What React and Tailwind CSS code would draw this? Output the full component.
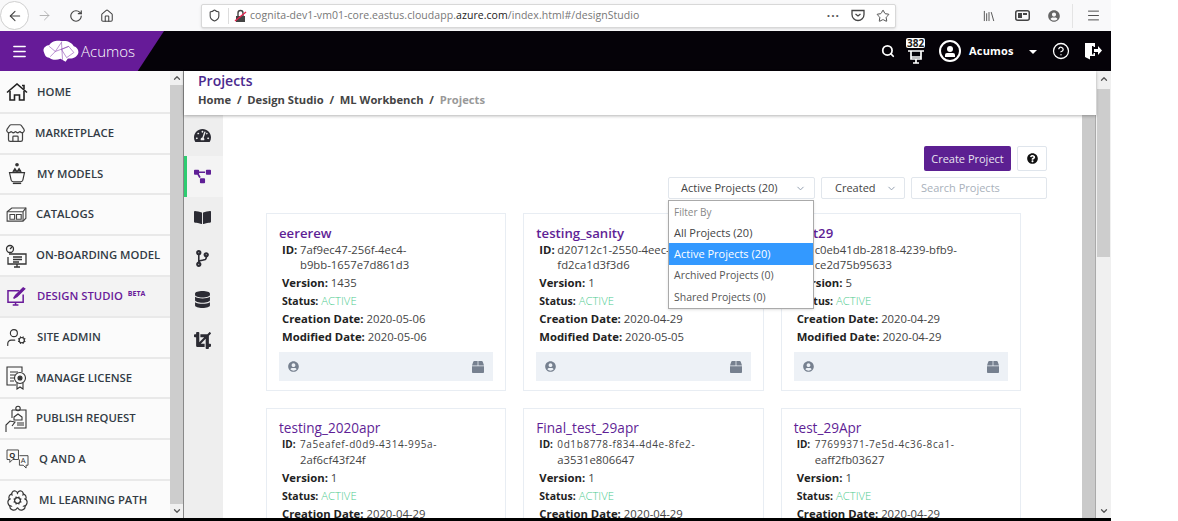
import { ArrowLeft, ArrowRight, RotateCw, House, Shield, Star, Menu, ChevronDown, ChevronUp, Store, UserCog, BrainCog, Search, CircleHelp, Library } from "lucide-react";
import { FaTachometerAlt, FaProjectDiagram, FaBookOpen, FaCodeBranch, FaDatabase, FaCrop, FaUserCircle, FaBox, FaQuestionCircle } from "react-icons/fa";

function HomeIcon() {
  return (
    <svg width="22" height="18" viewBox="0 0 22 18" fill="none" stroke="#222" strokeWidth="1.6">
      <path d="M1 9.500L11 1l10 8.500" />
      <path d="M4 8v9h4.500v-5h5v5H18V8" />
      <path d="M16 2.500h2v3.500" />
    </svg>
  );
}

function ModelsIcon() {
  return (
    <svg width="20" height="25" viewBox="0 0 24 28" fill="none" stroke="#333" strokeWidth="1.4">
      <circle cx="12" cy="3.5" r="2.2" fill="#333" stroke="none" />
      <path d="M7 12l2.5-4 2.5 4M12 12l2.5-4 2.5 4" fill="#333" />
      <path d="M3 13h18l-2 9a3 3 0 0 1-3 2H8a3 3 0 0 1-3-2z" />
      <path d="M7 26h10" />
    </svg>
  );
}

function CatalogIcon() {
  return (
    <svg width="21" height="15" viewBox="0 0 22 16" fill="none" stroke="#444" strokeWidth="1.2">
      <path d="M1 5l5-4h15v11l-3 3H1z" />
      <path d="M1 5h17v10M18 5l3-4" />
      <path d="M4 8h5v5H4zM11 8h5v5h-5z" />
    </svg>
  );
}

function BoardingIcon() {
  return (
    <svg width="22" height="24" viewBox="0 0 22 24" fill="none" stroke="#333" strokeWidth="1.3">
      <circle cx="5" cy="5" r="3.500" />
      <path d="M5 5l2-2" />
      <path d="M4 10h17v10H3v-7" />
      <path d="M8 13h9M8 15.500h9M8 18h6M9 23h6M12 20v3" />
    </svg>
  );
}

function DesignIcon() {
  return (
    <svg width="20" height="19" viewBox="0 0 21 20" fill="none" stroke="#6a1b9a" strokeWidth="1.6">
      <path d="M13 4H1v12h16V8" />
      <path d="M6 19h6M9 16v3" />
      <path d="M7 12l2-3 8-8 1.500 1-8 8z" fill="#6a1b9a" />
    </svg>
  );
}

function LicenseIcon() {
  return (
    <svg width="21" height="24" viewBox="0 0 21 24" fill="none" stroke="#333" strokeWidth="1.1">
      <path d="M10 19H1V1h15v5" />
      <path d="M4 6h8M4 9h5M4 12h4M4 15h4" />
      <circle cx="14" cy="12" r="5.500" />
      <circle cx="14" cy="12" r="2" fill="#333" />
      <path d="M11 17v6l3-2 3 2v-6" />
    </svg>
  );
}

function PublishIcon() {
  return (
    <svg width="22" height="28" viewBox="0 0 22 28" fill="none" stroke="#333" strokeWidth="1.1">
      <path d="M7 5h14v18H9" />
      <circle cx="13" cy="3.500" r="2.200" />
      <path d="M9 12l4-3 4 3v3H9zM12 18h7M12 20h7" />
      <path d="M7 5v8M1 27v-7l4-4 5 1-3 4" />
    </svg>
  );
}

function QaIcon() {
  return (
    <svg width="23" height="21" viewBox="0 0 24 22" fill="none" stroke="#444" strokeWidth="1">
      <path d="M1 1h12v10H7l-3 3v-3H1z" />
      <path d="M14 7h9v10h-2v3l-3-3h-4v-6" />
      <text x="3.500" y="9" fontSize="8" fontWeight="700" fill="#333" stroke="none" fontFamily="Open Sans">Q</text>
      <text x="15.500" y="15" fontSize="8" fill="#333" stroke="none" fontFamily="Open Sans">A</text>
    </svg>
  );
}

function BrainLogo() {
  return (
    <svg width="37" height="23" viewBox="0 0 36 22">
      <path d="M1 12c-2-4 2-7 5-7 2-4 8-5 12-4 5-1 10 1 12 5 4 1 6 6 3 9-2 3-6 3-9 3l-2 3-5-3c-4 2-9 1-11-1-3 0-4-2-5-5z" fill="#fff" />
      <path d="M6 6l6 5 6-9 1 17M12 11l-5 5M18 9l7-3 5 6-7 5-5-8M25 6l-13 5" fill="none" stroke="#7b2ca6" strokeWidth=".5" />
    </svg>
  );
}

function PocketIcon() {
  return (
    <svg width="14" height="13" viewBox="0 0 14 13" fill="none" stroke="#444" strokeWidth="1.3">
      <path d="M1 1.500h12v4a6 6 0 0 1-12 0z" />
      <path d="M4.500 5L7 7l2.500-2" />
    </svg>
  );
}

function LockIcon() {
  return (
    <svg width="14" height="14" viewBox="0 0 14 14">
      <path d="M2 7h9v6H2z" fill="#444" />
      <path d="M4 7V4a2.500 2.500 0 0 1 5 0v3" fill="none" stroke="#444" strokeWidth="1.400" />
      <path d="M1 12L12 3" stroke="#e22850" strokeWidth="1.500" />
    </svg>
  );
}

function SidebarIcon() {
  return (
    <svg width="15" height="11" viewBox="0 0 15 11">
      <rect x=".75" y=".75" width="13.500" height="9.500" rx="2" fill="none" stroke="#444" strokeWidth="1.500" />
      <path d="M3 3h4v5H3zM8 3h4v2H8z" fill="#444" />
    </svg>
  );
}

function BadgeIcon() {
  return (
    <div className="relative w-[22px] h-[30px]">
      <svg className="absolute left-[2px] top-[12px]" width="18" height="19" viewBox="0 0 18 19" fill="none" stroke="#fff" strokeWidth="1.700">
        <path d="M1 3h16M4 3v8h10V3M4 9h10M9 11v4M6 15h6" />
      </svg>
      <span className="absolute left-[1px] top-[2px] bg-white rounded-[2px] px-[1px] text-[10px] leading-[10px] font-bold text-[#222]">382</span>
    </div>
  );
}

function DoorIcon() {
  return (
    <svg width="18" height="18" viewBox="0 0 18 18" fill="#fff">
      <path d="M1 1h9v3H8v10H6v3.500L1 15z" />
      <path d="M8 1h3v4H9.500V2.500H8zM9.500 11H11v3H8v-1.500h1.500z" />
      <path d="M10 7h4V4l4 4.500-4 4.500v-3h-4z" />
    </svg>
  );
}

const navItems = [
  { label: "HOME", icon: <HomeIcon />, gap: "w-[37px]" },
  { label: "MARKETPLACE", icon: <Store size={21} strokeWidth={1.4} color="#444" />, gap: "w-[35px]" },
  { label: "MY MODELS", icon: <ModelsIcon />, gap: "w-[37px]" },
  { label: "CATALOGS", icon: <CatalogIcon />, gap: "w-[36px]" },
  { label: "ON-BOARDING MODEL", icon: <BoardingIcon />, gap: "w-[36px]" },
  { label: "DESIGN STUDIO", icon: <DesignIcon />, gap: "w-[37px]", active: true },
  { label: "SITE ADMIN", icon: <UserCog size={21} strokeWidth={1.3} color="#333" />, gap: "w-[37px]" },
  { label: "MANAGE LICENSE", icon: <LicenseIcon />, gap: "w-[36px]" },
  { label: "PUBLISH REQUEST", icon: <PublishIcon />, gap: "w-[36px]" },
  { label: "Q AND A", icon: <QaIcon />, gap: "w-[39px]" },
  { label: "ML LEARNING PATH", icon: <BrainCog size={23} strokeWidth={1.2} color="#333" />, gap: "w-[39px]" },
];

const railIcons = [
  { Icon: FaTachometerAlt },
  { Icon: FaProjectDiagram, active: true },
  { Icon: FaBookOpen },
  { Icon: FaCodeBranch },
  { Icon: FaDatabase },
  { Icon: FaCrop },
];

const projects = [
  { name: "eererew", id1: "7af9ec47-256f-4ec4-", id2: "b9bb-1657e7d861d3", version: "1435", created: "2020-05-06", modified: "2020-05-06" },
  { name: "testing_sanity", id1: "d20712c1-2550-4eec-", id2: "fd2ca1d3f3d6", version: "1", created: "2020-04-29", modified: "2020-05-05" },
  { name: "test29", id1: "c0eb41db-2818-4239-bfb9-", id2: "ce2d75b95633", version: "5", created: "2020-04-29", modified: "2020-04-29" },
  { name: "testing_2020apr", id1: "7a5eafef-d0d9-4314-995a-", id2: "2af6cf43f24f", version: "1", created: "2020-04-29", modified: "2020-04-29", small: true },
  { name: "Final_test_29apr", id1: "0d1b8778-f834-4d4e-8fe2-", id2: "a3531e806647", version: "1", created: "2020-04-29", modified: "2020-04-29", small: true },
  { name: "test_29Apr", id1: "77699371-7e5d-4c36-8ca1-", id2: "eaff2fb03627", version: "1", created: "2020-04-29", modified: "2020-04-29", small: true },
];

function ProjectCard({ p }) {
  return (
    <div className="h-[178px] shrink-0 border border-[#e8edf3] bg-white pl-[12px] pr-[12px] pt-[10px]">
      <div className={`leading-[18px] text-[#5f1f96] ${p.small ? "text-[13.6px] font-medium" : "text-[13.2px] font-semibold"}`}>{p.name}</div>
      <div className="pl-[3px] text-[11.3px] text-[#444]">
        <div className="flex leading-[15px]">
          <b className={`w-[18px] shrink-0 font-bold text-[#222] ${p.small ? "text-[10px]" : ""}`}>ID:</b>
          <div>
            <div className={p.small ? "text-[10px] tracking-[0.6px]" : ""}>{p.id1}</div>
            <div>{p.id2}</div>
          </div>
        </div>
        <div className="mt-[1px] leading-[19px]"><b className="font-bold text-[#222]">Version:</b> {p.version}</div>
        <div className="leading-[18px]"><b className="text-[10.5px] font-bold text-[#222]">Status:</b> <span className="font-light text-[#4ecb8f]">ACTIVE</span></div>
        <div className="leading-[18px]"><b className="font-bold text-[#222]">Creation Date:</b> {p.created}</div>
        <div className="leading-[18px]"><b className="font-bold text-[#222]">Modified Date:</b> {p.modified}</div>
      </div>
      <div className="mt-[6px] h-[29px] bg-[#edf1f6] flex items-center justify-between px-[9px] text-[#76808f]">
        <FaUserCircle size={11} />
        <FaBox size={12} />
      </div>
    </div>
  );
}

export default function App() {
  return (
    <div className="w-[1178px] h-[521px] overflow-hidden bg-white font-['Open_Sans',sans-serif]">
      <div className="w-[1111px] h-[521px] flex flex-col">
        {/* browser toolbar */}
        <div className="h-[31px] shrink-0 bg-[#f9f9fa] flex items-center text-[#444] relative">
          <div className="w-[29px] h-[29px] rounded-full border border-[#cfcfcf] bg-white flex items-center justify-center">
            <ArrowLeft size={16} strokeWidth={1.6} />
          </div>
          <ArrowRight size={15} strokeWidth={1.4} className="ml-[8px] text-[#aaa]" />
          <RotateCw size={14} strokeWidth={2} className="ml-[17px]" />
          <House size={14} strokeWidth={1.8} className="ml-[17px]" />
          <div className="ml-[87px] w-[695px] h-[24px] bg-white border border-[#d8d8d8] rounded-[2px] flex items-center shadow-sm">
            <Shield size={13} strokeWidth={2} className="ml-[6px]" />
            <div className="w-px h-[16px] bg-[#ddd] ml-[7px]" />
            <div className="ml-[5px]"><LockIcon /></div>
            <div className="ml-[2px] text-[10.5px] text-[#777] whitespace-nowrap tracking-[0.06px]">
              cognita-dev1-vm01-core.eastus.cloudapp.<span className="text-[#222]">azure.com</span>/index.html#/designStudio
            </div>
            <div className="ml-auto text-[#555] text-[12px] font-bold tracking-[1px]">···</div>
            <div className="ml-[11px]"><PocketIcon /></div>
            <Star size={14} strokeWidth={1.6} className="ml-[11px] mr-[5px]" />
          </div>
          <Library size={14} strokeWidth={1.5} className="ml-[86px]" />
          <div className="ml-[19px]"><SidebarIcon /></div>
          <FaUserCircle size={12} className="ml-[18px] text-[#666]" />
          <div className="w-px h-[24px] bg-[#e4e4e4] ml-[12px]" />
          <Menu size={15} strokeWidth={1.5} className="ml-[13px]" />
        </div>

        {/* app header */}
        <div className="h-[40px] shrink-0 bg-[#050208] relative flex items-center">
          <div className="w-[164px] h-[40px] bg-[#661b98] [clip-path:polygon(0_0,100%_0,84%_100%,0_100%)] flex items-center">
            <Menu size={17} strokeWidth={2} className="ml-[11px] text-white" />
            <div className="ml-[15px]"><BrainLogo /></div>
            <span className="ml-[1px] text-[15px] font-light text-white">Acumos</span>
          </div>
          <Search size={14} strokeWidth={3} className="ml-[717px] text-white" />
          <div className="ml-[10px]"><BadgeIcon /></div>
          <div className="ml-[12px] w-[22px] h-[22px] rounded-full border-2 border-white flex flex-col items-center justify-center">
            <div className="w-[6px] h-[6px] rounded-full bg-white" />
            <div className="w-[10px] h-[4px] mt-[1px] rounded-t-[2px] bg-white" />
          </div>
          <span className="ml-[8px] text-[11px] font-bold text-white tracking-[0.2px]">Acumos</span>
          <div className="ml-[15px] mt-[2px] w-0 h-0 border-x-[4px] border-x-transparent border-t-[4px] border-t-white" />
          <CircleHelp size={18} strokeWidth={1.7} className="ml-[15px] text-white" />
          <div className="ml-[14px]"><DoorIcon /></div>
        </div>

        <div className="flex-1 min-h-0 flex">
          {/* left nav */}
          <div className="w-[170px] shrink-0 bg-[#fbfbfb] pt-[2px]">
            {navItems.map((n) => (
              <div key={n.label} className={`h-[40.8px] flex items-center border-b-2 border-[#e9e9e9] ${n.active ? "bg-[#f3f3f3]" : ""}`}>
                <div className={`${n.gap} shrink-0 flex justify-center pl-[1px] pr-[5px]`}>{n.icon}</div>
                <span className={`text-[11.3px] font-semibold whitespace-nowrap ${n.active ? "text-[#6a1b9a]" : "text-[#333b45]"}`}>
                  {n.label}
                  {n.active && <sup className="ml-[5px] text-[7px] font-bold">BETA</sup>}
                </span>
              </div>
            ))}
          </div>
          <div className="w-[13px] shrink-0 bg-[#f0f0f0] flex flex-col items-center">
            <ChevronUp size={10} strokeWidth={3} className="my-[2px] text-[#555]" />
            <div className="flex-1 w-full bg-[#cdcdcd]" />
            <ChevronDown size={10} strokeWidth={3} className="my-[2px] text-[#555]" />
          </div>
          <div className="w-px shrink-0 bg-[#888]" />

          {/* main */}
          <div className="w-[912px] shrink-0 flex flex-col">
            <div className="h-[44px] shrink-0 bg-white pl-[14px] shadow-[0_1px_3px_rgba(0,0,0,0.3)] relative z-10">
              <div className="text-[14px] leading-[20px] font-semibold text-[#4b2a8f]">Projects</div>
              <div className="mt-[1px] text-[11.2px] font-bold text-[#444]">
                Home&nbsp; /&nbsp; Design Studio&nbsp; /&nbsp; ML Workbench&nbsp; /&nbsp; <span className="text-[#999]">Projects</span>
              </div>
            </div>
            <div className="flex-1 min-h-0 flex">
              <div className="w-[39px] shrink-0 bg-[#eeeeee]">
                {railIcons.map(({ Icon, active }, i) => (
                  <div key={i} className={`h-[41px] flex items-center justify-center ${active ? "bg-[#f4f4f4] border-l-[3px] border-[#2ecc71] pr-[6px]" : "pr-[3px]"}`}>
                    <Icon size={17} className={active ? "text-[#5f1f96]" : "text-[#2b2b33]"} />
                  </div>
                ))}
              </div>
              <div className="w-[859px] shrink-0 pt-[31px] overflow-hidden">
                <div className="flex justify-end gap-[6px] pr-[35px]">
                  <button className="w-[87px] h-[25px] rounded-[2px] bg-[#5c2092] text-[11px] pt-[1px] text-[#e9e4f0]">Create Project</button>
                  <button className="w-[30px] h-[25px] rounded-[2px] bg-white border border-[#dfe5ec] flex items-center justify-center text-[#111]">
                    <FaQuestionCircle size={11} />
                  </button>
                </div>
                <div className="mt-[6px] h-[22px] flex justify-end gap-[6px] pr-[35px] text-[11px]">
                  <div className="relative z-20 w-[147px] border border-[#e1e6ec] rounded-[2px] flex items-center pl-[12px] pr-[8px] text-[#444]">
                    Active Projects (20)
                    <ChevronDown size={11} className="ml-auto text-[#8a97a8]" />
                    <div className="absolute -left-px top-[22px] w-[146px] h-[109px] bg-white border border-[#aaa] flex flex-col shadow-sm">
                      <div className="h-[22px] flex items-center pl-[5px] text-[10px] text-[#888]">Filter By</div>
                      <div className="h-[20px] flex items-center pl-[5px] text-[#444]">All Projects (20)</div>
                      <div className="h-[22px] flex items-center pl-[5px] bg-[#3399ff] text-white">Active Projects (20)</div>
                      <div className="h-[22px] flex items-center pl-[5px] text-[10.5px] text-[#555]">Archived Projects (0)</div>
                      <div className="h-[21px] flex items-center pl-[5px] text-[10.5px] text-[#555]">Shared Projects (0)</div>
                    </div>
                  </div>
                  <div className="w-[84px] border border-[#e1e6ec] rounded-[2px] flex items-center pl-[13px] pr-[7px] text-[#444]">
                    Created
                    <ChevronDown size={11} className="ml-auto text-[#8a97a8]" />
                  </div>
                  <div className="w-[136px] border border-[#e1e6ec] rounded-[2px] flex items-center pl-[9px] text-[#a9b1bb]">Search Projects</div>
                </div>
                <div className="ml-[43px] mt-[14px] w-[755px] grid grid-cols-3 gap-x-[17px] gap-y-[17px]">
                  {projects.map((p) => (
                    <ProjectCard key={p.name} p={p} />
                  ))}
                </div>
              </div>
              <div className="w-[14px] shrink-0 bg-[#cacaca] border-r border-[#aaa]" />
            </div>
          </div>

          {/* outer scrollbar */}
          <div className="w-[15px] shrink-0 bg-[#f0f0f0] flex flex-col items-center">
            <ChevronUp size={10} strokeWidth={3} className="mt-[3px] mb-[5px] text-[#555]" />
            <div className="w-[13px] h-[168px] bg-[#cdcdcd]" />
            <ChevronDown size={10} strokeWidth={3} className="mt-auto mb-[2px] text-[#555]" />
          </div>
        </div>

        <div className="h-[3px] shrink-0 bg-black" />
      </div>
    </div>
  );
}
